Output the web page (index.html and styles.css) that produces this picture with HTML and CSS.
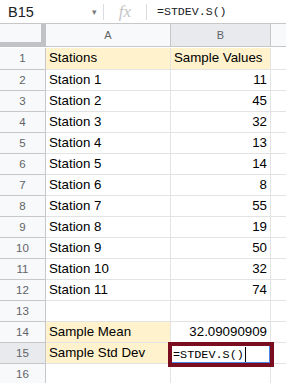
FILE: index.html
```html
<!DOCTYPE html>
<html lang="en">
<head>
  <meta charset="UTF-8" />
  <title>Sample Std Dev</title>
  <link rel="stylesheet" href="styles.css">
</head>
<body>

  <div class="formula-bar">
    <div class="name-box">B15</div>
    <span class="caret">&#9662;</span>
    <span class="sep"></span>
    <span class="fx">fx</span>
    <span class="sep"></span>
    <div class="formula">=STDEV.S()</div>
  </div>

  <div class="sheet">
    <div class="row head">
      <div class="corner"></div>
      <div class="col-head">A</div>
      <div class="col-head sel">B</div>
      <div class="col-head rest"></div>
    </div>

    <div class="row first">
      <div class="num">1</div>
      <div class="cell hl">Stations</div>
      <div class="cell hl">Sample Values</div>
      <div class="cell rest"></div>
    </div>
    <div class="row"><div class="num">2</div><div class="cell">Station 1</div><div class="cell val">11</div><div class="cell rest"></div></div>
    <div class="row"><div class="num">3</div><div class="cell">Station 2</div><div class="cell val">45</div><div class="cell rest"></div></div>
    <div class="row"><div class="num">4</div><div class="cell">Station 3</div><div class="cell val">32</div><div class="cell rest"></div></div>
    <div class="row"><div class="num">5</div><div class="cell">Station 4</div><div class="cell val">13</div><div class="cell rest"></div></div>
    <div class="row"><div class="num">6</div><div class="cell">Station 5</div><div class="cell val">14</div><div class="cell rest"></div></div>
    <div class="row"><div class="num">7</div><div class="cell">Station 6</div><div class="cell val">8</div><div class="cell rest"></div></div>
    <div class="row"><div class="num">8</div><div class="cell">Station 7</div><div class="cell val">55</div><div class="cell rest"></div></div>
    <div class="row"><div class="num">9</div><div class="cell">Station 8</div><div class="cell val">19</div><div class="cell rest"></div></div>
    <div class="row"><div class="num">10</div><div class="cell">Station 9</div><div class="cell val">50</div><div class="cell rest"></div></div>
    <div class="row"><div class="num">11</div><div class="cell">Station 10</div><div class="cell val">32</div><div class="cell rest"></div></div>
    <div class="row"><div class="num">12</div><div class="cell">Station 11</div><div class="cell val">74</div><div class="cell rest"></div></div>
    <div class="row"><div class="num">13</div><div class="cell"></div><div class="cell"></div><div class="cell rest"></div></div>
    <div class="row"><div class="num">14</div><div class="cell hl">Sample Mean</div><div class="cell val">32.09090909</div><div class="cell rest"></div></div>
    <div class="row">
      <div class="num sel">15</div>
      <div class="cell hl">Sample Std Dev</div>
      <div class="cell active">
        <div class="editor"><span class="formula-text">=STDEV.S()</span><span class="cursor"></span></div>
      </div>
      <div class="cell rest"></div>
    </div>
    <div class="row"><div class="num">16</div><div class="cell"></div><div class="cell"></div><div class="cell rest"></div></div>
  </div>

</body>
</html>
```

FILE: styles.css
```css
body {
  margin: 0;
  width: 286px;
  height: 383px;
  overflow: hidden;
  background: #fff;
  font-family: "Liberation Sans", Arial, sans-serif;
  color: #000;
}
.formula-bar {
  display: flex;
  align-items: center;
  height: 24px;
  box-sizing: border-box;
  border-bottom: 1px solid #c7c7c7;
}
.name-box {
  width: 84px;
  padding-left: 8px;
  font-size: 14.5px;
  color: #202124;
}
.caret {
  font-size: 9px;
  color: #7a7a7a;
  width: 11px;
}
.sep {
  width: 1px;
  height: 16px;
  background: #dadce0;
}
.fx {
  width: 42px;
  text-align: center;
  font-family: "Liberation Serif", serif;
  font-style: italic;
  font-size: 17px;
  color: #c4c4c4;
}
.formula {
  padding-left: 10px;
  font-family: "Liberation Mono", monospace;
  font-size: 11.6px;
  color: #202124;
}
.sheet {
  display: flex;
  flex-direction: column;
}
.row {
  display: flex;
  height: 21px;
}
.row.first {
  height: 23px;
  padding-top: 1px;
  box-sizing: border-box;
}
.row.head {
  height: 23px;
}
.corner {
  width: 41px;
  height: 18px;
  background: #f8f9fa;
  border-right: 5px solid #c0c2c5;
  border-bottom: 5px solid #c0c2c5;
}
.col-head {
  width: 125px;
  box-sizing: border-box;
  background: #f8f9fa;
  border-right: 1px solid #c7c7c7;
  border-bottom: 1px solid #c7c7c7;
  font-size: 11px;
  color: #5f6368;
  text-align: center;
  line-height: 22px;
}
.col-head.sel {
  width: 100px;
  background: #e8eaed;
}
.col-head.rest {
  flex: 1;
  border-right: none;
}
.num {
  width: 46px;
  box-sizing: border-box;
  background: #f8f9fa;
  border-right: 1px solid #c7c7c7;
  border-bottom: 1px solid #c7c7c7;
  font-size: 11.5px;
  color: #5f6368;
  text-align: center;
  line-height: 20px;
}
.num.sel {
  background: #e8eaed;
}
.cell {
  width: 125px;
  box-sizing: border-box;
  border-right: 1px solid #e2e3e3;
  border-bottom: 1px solid #e2e3e3;
  padding: 0 3px;
  font-size: 13.3px;
  line-height: 20px;
  white-space: nowrap;
}
.cell + .cell {
  width: 100px;
}
.cell.rest {
  flex: 1;
  border-right: none;
}
.cell.hl {
  background: #fff2cc;
}
.cell.val {
  text-align: right;
}
.cell.active {
  position: relative;
}
.editor {
  position: absolute;
  left: -3px;
  top: -1px;
  right: -4px;
  bottom: -4px;
  border: 4px solid #7b0d21;
  background: #fff;
  display: flex;
  align-items: center;
  padding-left: 1px;
}
.editor::after {
  content: "";
  position: absolute;
  left: 0;
  top: 0;
  right: 0;
  bottom: 0;
  border-right: 1px solid #4a86e8;
  border-bottom: 1px solid #4a86e8;
}
.formula-text {
  font-family: "Liberation Mono", monospace;
  font-size: 11.8px;
  color: #000;
}
.cursor {
  width: 1px;
  height: 15px;
  background: #000;
  margin-left: 1px;
}
```
